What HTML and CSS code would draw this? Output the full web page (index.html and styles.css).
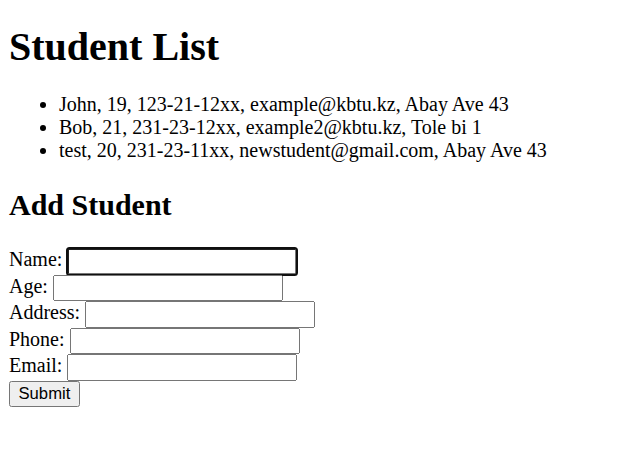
FILE: index.html
```html
<!DOCTYPE html>
<html class="root">
<head>
<meta charset="utf-8">
<title>Student List</title>
<link rel="stylesheet" href="styles.css">
</head>
<body class="page">
<h1 class="title">Student List</h1>
<ul class="students">
<li>John, 19, 123-21-12xx, example@kbtu.kz, Abay Ave 43</li>
<li>Bob, 21, 231-23-12xx, example2@kbtu.kz, Tole bi 1</li>
<li>test, 20, 231-23-11xx, newstudent@gmail.com, Abay Ave 43</li>
</ul>
<h2 class="subtitle">Add Student</h2>
<form class="form">
<label>Name:</label> <input type="text" class="field field-focus"><br>
<label>Age:</label> <input type="text" class="field"><br>
<label>Address:</label> <input type="text" class="field"><br>
<label>Phone:</label> <input type="text" class="field"><br>
<label>Email:</label> <input type="text" class="field"><br>
<button type="button" class="submit">Submit</button>
</form>
</body>
</html>
```
FILE: styles.css
```css
.root {
  zoom: 1.25;
}
.page {
  margin: 0;
  padding: 0 7.2px 8px;
  font-family: "Liberation Serif", "Times New Roman", serif;
  font-size: 16px;
  color: #000;
  background: #fff;
}
.title {
  font-size: 32px;
  margin: 18.2px 0 18.24px;
}
.students {
  margin: 16px 0;
  padding-left: 40px;
}
.subtitle {
  font-size: 24px;
  margin: 21.5px 0 20.7px;
}
.field {
  font-family: "Liberation Sans", Arial, sans-serif;
  font-size: 13.333px;
}
.field-focus {
  outline: 2px solid #101010;
  outline-offset: -1px;
  border-radius: 2px;
}
.submit {
  font-family: "Liberation Sans", Arial, sans-serif;
  font-size: 13.333px;
}
```
